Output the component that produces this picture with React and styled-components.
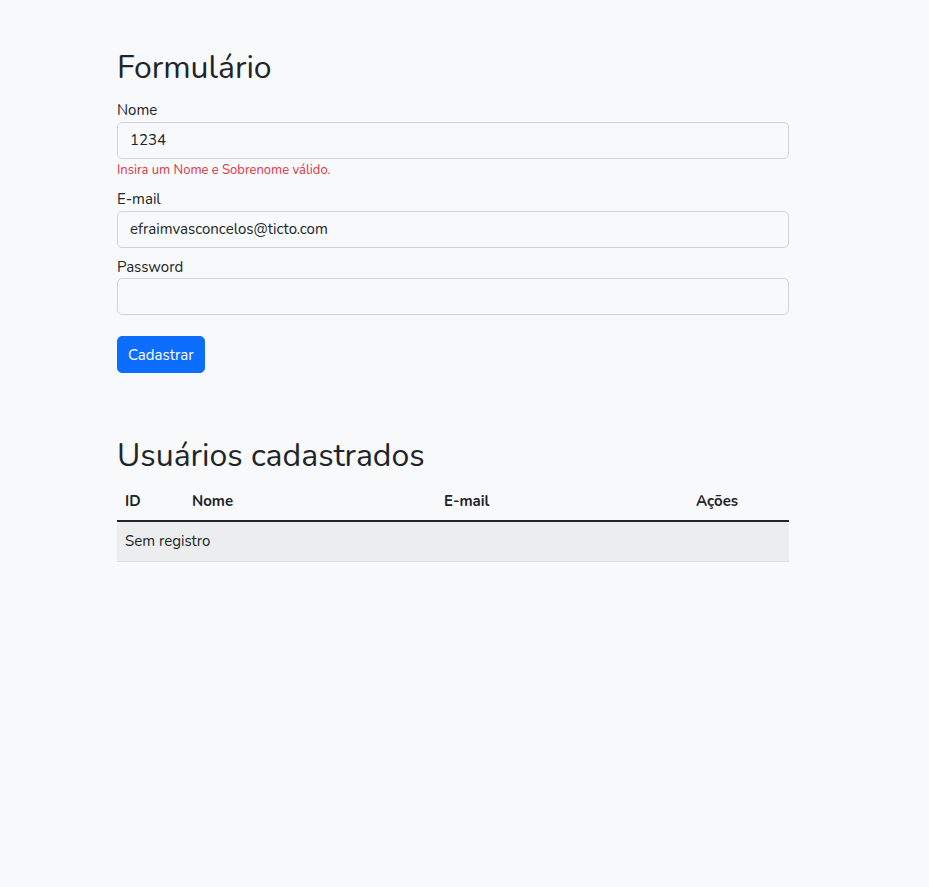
import styled, { createGlobalStyle } from 'styled-components';

const GlobalStyle = createGlobalStyle`
    * { box-sizing: border-box; }
    body {
        margin: 0;
        background-color: #f8f9fa;
        font-family: Nunito, Lato, "Open Sans", sans-serif;
        font-size: 15px;
        line-height: 1.5;
        color: #212529;
    }
`;

const Page = styled.div`
    width: 672px;
    margin-left: 117px;
    padding-top: 49px;
`;

const Heading = styled.h2`
    font-size: 32px;
    font-weight: 400;
    line-height: 1.2;
    margin: 0 0 ${(p) => p.$gap || '13px'};
`;

const Form = styled.form`
    display: flex;
    flex-direction: column;
`;

const Group = styled.div`
    display: flex;
    flex-direction: column;
    margin-bottom: 9px;
`;

const Label = styled.label`
    font-size: 15px;
    line-height: 21.5px;
    margin-bottom: 0;
`;

const Input = styled.input`
    height: 37px;
    padding: 6px 12px;
    font-family: inherit;
    font-size: 15px;
    color: #212529;
    background-color: #f8f9fa;
    border: 1px solid #ced4da;
    border-radius: 5px;
    outline: none;
`;

const Feedback = styled.div`
    margin-top: 2px;
    font-size: 13px;
    color: #dc3545;
`;

const Button = styled.button`
    align-self: flex-start;
    margin-top: 12px;
    height: 37px;
    padding: 6px 10px;
    font-family: inherit;
    font-size: 15px;
    color: #fff;
    background-color: #0d6efd;
    border: 1px solid #0d6efd;
    border-radius: 5px;
`;

const Section = styled.section`
    margin-top: 64px;
`;

const Table = styled.table`
    width: 100%;
    border-collapse: collapse;
    font-size: 15px;
`;

const Th = styled.th`
    width: ${(p) => p.$w};
    text-align: left;
    font-weight: 700;
    padding: 8px;
    border-bottom: 2px solid #212529;
`;

const Td = styled.td`
    padding: 8px;
    background-color: #ecedee;
    border-bottom: 1px solid #dee2e6;
`;

export default function App() {
    return (
        <>
            <GlobalStyle />
            <Page>
                <Heading>Formulário</Heading>
                <Form onSubmit={(e) => e.preventDefault()}>
                    <Group>
                        <Label>Nome</Label>
                        <Input defaultValue="1234" />
                        <Feedback>Insira um Nome e Sobrenome válido.</Feedback>
                    </Group>
                    <Group>
                        <Label>E-mail</Label>
                        <Input defaultValue="efraimvasconcelos@ticto.com" />
                    </Group>
                    <Group>
                        <Label>Password</Label>
                        <Input type="password" />
                    </Group>
                    <Button type="submit">Cadastrar</Button>
                </Form>

                <Section>
                    <Heading $gap="6px">Usuários cadastrados</Heading>
                    <Table>
                        <thead>
                            <tr>
                                <Th $w="67px">ID</Th>
                                <Th $w="252px">Nome</Th>
                                <Th $w="252px">E-mail</Th>
                                <Th>Ações</Th>
                            </tr>
                        </thead>
                        <tbody>
                            <tr>
                                <Td colSpan={4}>Sem registro</Td>
                            </tr>
                        </tbody>
                    </Table>
                </Section>
            </Page>
        </>
    );
}
